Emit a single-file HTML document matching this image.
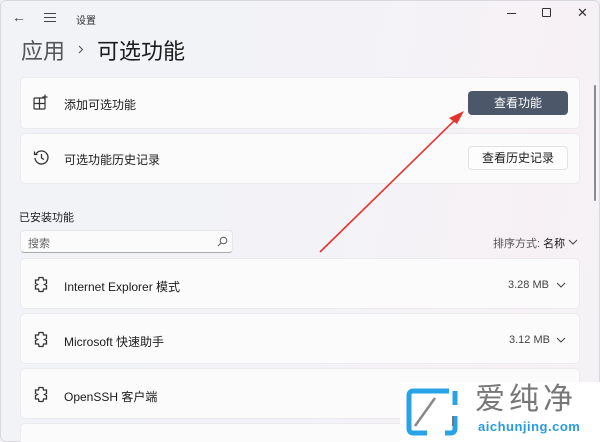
<!DOCTYPE html>
<html><head><meta charset="utf-8"><style>
*{margin:0;padding:0;box-sizing:border-box}
html,body{width:600px;height:442px;overflow:hidden}
body{font-family:"Liberation Sans","Noto Sans CJK SC",sans-serif;background:linear-gradient(100deg,#f2f3f7 0%,#f3f3f7 55%,#f7f1f5 85%,#f4f2f6 100%);position:relative;color:#1b1b1b}
.abs{position:absolute}
.card{position:absolute;left:20px;width:560px;background:#fbfbfc;border:1px solid #ebebee;border-radius:5px}
.t{position:absolute;font-size:12px;color:#1b1b1b}
.btn{position:absolute;left:468px;width:100px;height:24px;border-radius:4px;font-size:12px;text-align:center;line-height:24px}
</style></head><body>
<div class="abs" style="left:0;top:0;width:600px;height:442px;border:1px solid #d9d9dd;border-radius:6px"></div>
<div class="abs" style="left:12px;top:9px;font-size:14px;color:#444">←</div>
<div class="abs" style="left:44px;top:13px;width:12px;height:9px;border-top:1.3px solid #444;border-bottom:1.3px solid #444"></div>
<div class="abs" style="left:44px;top:17px;width:12px;height:1.3px;background:#444"></div>
<div class="abs" style="left:76px;top:12px;font-size:10px;color:#333">设置</div>
<div class="abs" style="left:507px;top:13px;width:9px;height:1px;background:#333"></div>
<div class="abs" style="left:542px;top:8px;width:9px;height:9px;border:1.2px solid #333;border-radius:1px"></div>
<div class="abs" style="left:577px;top:5px;font-size:13px;color:#333">✕</div>
<div class="abs" style="left:21px;top:34px;font-size:22px;color:#555">应用</div>
<svg class="abs" style="left:78px;top:45px" width="6" height="9" viewBox="0 0 6 9" fill="none" stroke="#555" stroke-width="1.1"><path d="M1 1l3.5 3.5L1 8"/></svg>
<div class="abs" style="left:97px;top:34px;font-size:22px;color:#1b1b1b">可选功能</div>

<div class="card" style="top:77px;height:52px"></div>
<svg class="abs" style="left:33px;top:94px" width="16" height="16" viewBox="0 0 16 16" fill="none" stroke="#333" stroke-width="1.2"><rect x="1" y="4" width="11" height="11" rx="1"/><path d="M6.5 4v11M1 9.5h11M12 0.5v5M9.5 3h5"/></svg>
<div class="t" style="left:64px;top:96px">添加可选功能</div>
<div class="btn" style="top:91px;background:#4c5869;color:#fff">查看功能</div>

<div class="card" style="top:133px;height:51px"></div>
<svg class="abs" style="left:33px;top:149px" width="17" height="17" viewBox="0 0 17 17" fill="none" stroke="#333" stroke-width="1.3"><path d="M3 5A6.5 6.5 0 1 1 2 9"/><path d="M1.5 2.5v3h3M8.5 5v4l2.5 1.5"/></svg>
<div class="t" style="left:64px;top:151px">可选功能历史记录</div>
<div class="btn" style="top:146px;background:#fdfdfd;border:1px solid #e2e2e5;line-height:22px">查看历史记录</div>

<div class="abs" style="left:19px;top:209px;font-size:11px;color:#1b1b1b">已安装功能</div>
<div class="abs" style="left:20px;top:230px;width:213px;height:23px;background:#fbfbfc;border:1px solid #e6e6e9;border-bottom:1px solid #aaa;border-radius:4px"></div>
<div class="abs" style="left:28px;top:235px;font-size:11px;color:#666">搜索</div>
<svg class="abs" style="left:217px;top:236px" width="11" height="11" viewBox="0 0 11 11" fill="none" stroke="#555" stroke-width="1"><circle cx="6.5" cy="4.5" r="3.3"/><path d="M4 7L1 10"/></svg>
<div class="abs" style="left:493px;top:235px;font-size:11px;color:#555">排序方式: <span style="color:#1b1b1b">名称</span></div>
<svg class="abs" style="left:568px;top:239px" width="10" height="6" viewBox="0 0 10 6" fill="none" stroke="#444" stroke-width="1"><path d="M1 1l4 4 4-4"/></svg>

<div class="card" style="top:258px;height:51px"></div>
<div class="card" style="top:313px;height:51px"></div>
<div class="card" style="top:368px;height:51px"></div>
<div class="card" style="top:423px;height:30px"></div>
<svg width="0" height="0" style="position:absolute"><defs><path id="pz" d="M5 1.5h4l0.5 2.5h3v3.5l-2 1 2 1v3.5h-3l-0.5 2.5h-4l-0.5-2.5h-3v-3.5l2-1-2-1v-3.5h3z"/></defs></svg>
<svg class="abs" style="left:34px;top:276px" width="16" height="18" viewBox="0 0 16 18" fill="none" stroke="#333" stroke-width="1.3"><use href="#pz"/></svg>
<svg class="abs" style="left:34px;top:331px" width="16" height="18" viewBox="0 0 16 18" fill="none" stroke="#333" stroke-width="1.3"><use href="#pz"/></svg>
<svg class="abs" style="left:34px;top:386px" width="16" height="18" viewBox="0 0 16 18" fill="none" stroke="#333" stroke-width="1.3"><use href="#pz"/></svg>
<div class="t" style="left:64px;top:278px">Internet Explorer 模式</div>
<div class="t" style="left:64px;top:333px">Microsoft 快速助手</div>
<div class="t" style="left:64px;top:388px">OpenSSH 客户端</div>
<div class="abs" style="left:508px;top:279px;font-size:11px;color:#444">3.28 MB</div>
<div class="abs" style="left:509px;top:334px;font-size:11px;color:#444">3.12 MB</div>
<svg class="abs" style="left:556px;top:282px" width="10" height="6" viewBox="0 0 10 6" fill="none" stroke="#444" stroke-width="1"><path d="M1 1l4 4 4-4"/></svg>
<svg class="abs" style="left:556px;top:337px" width="10" height="6" viewBox="0 0 10 6" fill="none" stroke="#444" stroke-width="1"><path d="M1 1l4 4 4-4"/></svg>
<div class="abs" style="left:594px;top:85px;width:2px;height:116px;background:#8a8a8e;border-radius:1px"></div>

<svg class="abs" style="left:0;top:0" width="600" height="442"><path d="M320 252L458 117" stroke="#e8322e" stroke-width="1.6"/><path d="M464 111L449 118L457 124Z" fill="#e8322e"/></svg>

<div class="abs" style="left:400px;top:382px;width:200px;height:60px;background:#fff"></div>
<svg class="abs" style="left:405px;top:386px" width="56" height="52" viewBox="0 0 56 52" fill="none"><path d="M44 5H8a4 4 0 0 0-4 4v34a4 4 0 0 0 4 4h14" stroke="#29a3e6" stroke-width="5"/><path d="M40 47h6a4 4 0 0 0 4-4V30" stroke="#29a3e6" stroke-width="5"/><path d="M50 5v14" stroke="#29a3e6" stroke-width="5"/><path d="M10 40L30 12" stroke="#888" stroke-width="2.5"/><path d="M48 30v10" stroke="#777" stroke-width="2"/></svg>
<div class="abs" style="left:475px;top:383px;font-size:30px;color:#777;letter-spacing:4px;line-height:34px">爱纯净</div>
<div class="abs" style="left:478px;top:419px;font-size:13px;font-weight:bold;color:#2a9be0;letter-spacing:0.5px">aichunjing.com</div>
</body></html>
